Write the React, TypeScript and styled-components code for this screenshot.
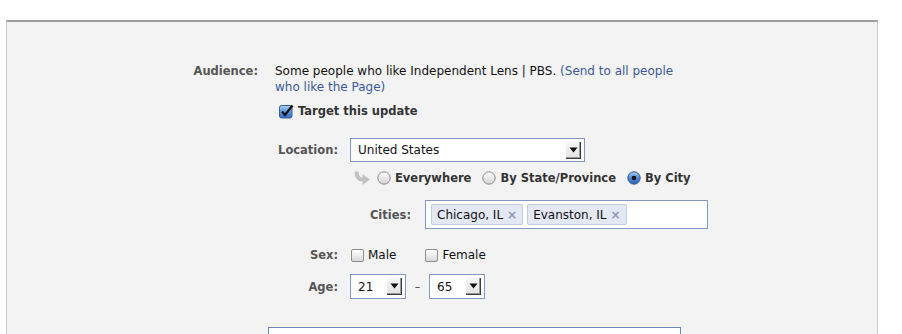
import styled, { createGlobalStyle } from "styled-components";

const GlobalStyle = createGlobalStyle`
  body {
    margin: 0;
    background: #fff;
    font-family: "DejaVu Sans", "Liberation Sans", sans-serif;
    font-size: 11px;
    color: #333;
  }
`;

const CheckBox = ({ checked }: { checked?: boolean }) =>
  checked ? (
    <BoxIcon width="15" height="15" viewBox="0 0 15 15">
      <defs>
        <linearGradient id="cbBlue" x1="0" y1="0" x2="0" y2="1">
          <stop offset="0" stopColor="#a9cdf3" />
          <stop offset="0.5" stopColor="#5d97de" />
          <stop offset="1" stopColor="#2f6ec6" />
        </linearGradient>
      </defs>
      <rect x="0.5" y="1.5" width="12.5" height="12.5" rx="2" fill="url(#cbBlue)" stroke="#3d5f91" />
      <path d="M3 7.5 L6 11 L13.5 1.5" fill="none" stroke="#111" strokeWidth="2.2" />
    </BoxIcon>
  ) : (
    <EmptyBox />
  );

const Radio = ({ on }: { on?: boolean }) => (
  <BoxIcon width="14" height="14" viewBox="0 0 14 14">
    <defs>
      <linearGradient id="rGray" x1="0" y1="0" x2="0" y2="1">
        <stop offset="0" stopColor="#fdfdfd" />
        <stop offset="1" stopColor="#d4d4d4" />
      </linearGradient>
      <linearGradient id="rBlue" x1="0" y1="0" x2="0" y2="1">
        <stop offset="0" stopColor="#a9cdf3" />
        <stop offset="0.5" stopColor="#4f8ad8" />
        <stop offset="1" stopColor="#2a62b8" />
      </linearGradient>
    </defs>
    <circle cx="7" cy="7" r="6.2" fill={on ? "url(#rBlue)" : "url(#rGray)"} stroke={on ? "#32588f" : "#8a8a8a"} />
    {on && <circle cx="7" cy="7" r="2.3" fill="#111" />}
  </BoxIcon>
);

// grey "sub option" hook arrow
const SubArrow = () => (
  <BoxIcon width="17" height="15" viewBox="0 0 17 15">
    <path d="M2.5 0.5 C2.5 6 4.5 8.5 9 8.5" fill="none" stroke="#c2c2c2" strokeWidth="4" />
    <path d="M8.5 3 L16 8.5 L8.5 14 Z" fill="#c2c2c2" />
  </BoxIcon>
);

const Select = ({ value, width, height }: { value: string; width: number; height: number }) => (
  <SelectBox style={{ width, height }}>
    <span>{value}</span>
    <DropBtn>
      <svg width="9" height="6" viewBox="0 0 9 6">
        <path d="M0.5 0.5 H8.5 L4.5 5.5 Z" fill="#111" />
      </svg>
    </DropBtn>
  </SelectBox>
);

const Token = ({ text }: { text: string }) => (
  <Chip>
    {text}
    <Close>×</Close>
  </Chip>
);

export default function App() {
  return (
    <>
      <GlobalStyle />
      <Panel>
        <Field $label={251} $gap={17}>
          <Label $top>Audience:</Label>
          <Desc>
            Some people who like Independent Lens | PBS. <Link>(Send to all people who like the Page)</Link>
          </Desc>
        </Field>

        <Target>
          <CheckBox checked />
          <span>Target this update</span>
        </Target>

        <Field $label={331} $gap={12} $top={19}>
          <Label>Location:</Label>
          <Select value="United States" width={235} height={24} />
        </Field>

        <RadioRow>
          <SubArrow />
          <Choice>
            <Radio />
            Everywhere
          </Choice>
          <Choice>
            <Radio />
            By State/Province
          </Choice>
          <Choice>
            <Radio on />
            By City
          </Choice>
        </RadioRow>

        <Field $label={404} $gap={14} $top={14}>
          <Label>Cities:</Label>
          <TokenInput>
            <Token text="Chicago, IL" />
            <Token text="Evanston, IL" />
          </TokenInput>
        </Field>

        <Field $label={331} $gap={13} $top={18}>
          <Label>Sex:</Label>
          <Options>
            <Plain>
              <CheckBox />
              Male
            </Plain>
            <Plain>
              <CheckBox />
              Female
            </Plain>
          </Options>
        </Field>

        <Field $label={331} $gap={12} $top={11}>
          <Label>Age:</Label>
          <AgeRange>
            <Select value="21" width={56} height={25} />
            <Dash>–</Dash>
            <Select value="65" width={56} height={25} />
          </AgeRange>
        </Field>

        <MessageBox />
      </Panel>
    </>
  );
}

const Panel = styled.div`
  margin: 20px 0 0 6px;
  width: 872px;
  height: 314px;
  overflow: hidden;
  box-sizing: border-box;
  background: #f3f3f3;
  border: 1px solid #c9c9c9;
  border-top: 2px solid #9e9e9e;
  border-bottom: none;
  padding-top: 41px;
`;

const Field = styled.div<{ $label: number; $gap: number; $top?: number }>`
  display: grid;
  grid-template-columns: ${(p) => p.$label}px auto;
  column-gap: ${(p) => p.$gap}px;
  align-items: center;
  justify-items: start;
  margin-top: ${(p) => p.$top ?? 0}px;
`;

const Label = styled.div<{ $top?: boolean }>`
  justify-self: end;
  align-self: ${(p) => (p.$top ? "start" : "center")};
  font-weight: bold;
  font-size: 11.5px;
  color: #555;
  line-height: 16px;
`;

const Desc = styled.div`
  max-width: 406px;
  font-size: 12px;
  line-height: 16px;
  color: #111;
`;

const Link = styled.span`
  color: #3b5998;
`;

const BoxIcon = styled.svg`
  display: block;
  flex: none;
`;

const EmptyBox = styled.span`
  display: block;
  flex: none;
  width: 11px;
  height: 11px;
  border: 1px solid #8c8c8c;
  border-radius: 2px;
  background: linear-gradient(#ffffff, #d9d9d9);
`;

const Target = styled.div`
  display: flex;
  align-items: center;
  gap: 4px;
  margin: 8px 0 0 272px;
  font-weight: bold;
  font-size: 11.5px;
  color: #333;
  line-height: 16px;
`;

const SelectBox = styled.div`
  box-sizing: border-box;
  display: flex;
  align-items: center;
  justify-content: space-between;
  padding: 0 3px 0 7px;
  background: #fff;
  border: 1px solid #8397c2;
  color: #111;
  font-size: 12px;
`;

const DropBtn = styled.span`
  display: flex;
  align-items: center;
  justify-content: center;
  width: 14px;
  height: 16px;
  padding: 0 1px 1px 0;
  background: linear-gradient(#f6f6f6, #e2e2e2);
  box-shadow: inset -1px -1px 0 #3c3c3c, inset -2px -2px 0 #9a9a9a;
`;

const RadioRow = styled.div`
  display: flex;
  align-items: center;
  margin: 8px 0 0 347px;
  line-height: 16px;
  & > svg {
    margin-right: 6px;
  }
`;

const Choice = styled.label`
  display: flex;
  align-items: center;
  gap: 4px;
  margin-right: 11px;
  font-weight: bold;
  font-size: 11.5px;
  color: #333;
`;

const TokenInput = styled.div`
  box-sizing: border-box;
  width: 283px;
  height: 29px;
  display: flex;
  align-items: center;
  gap: 4px;
  padding: 0 5px;
  background: #fff;
  border: 1px solid #8397c2;
`;

const Chip = styled.span`
  display: flex;
  align-items: center;
  gap: 4px;
  height: 19px;
  padding: 0 5px 0 5px;
  background: #e3e8f2;
  border: 1px solid #c3cde0;
  border-radius: 2px;
  color: #111;
  font-size: 12px;
`;

const Close = styled.span`
  color: #8b99b5;
  font-weight: bold;
  font-size: 12px;
`;

const Options = styled.div`
  display: flex;
  align-items: center;
  gap: 29px;
  line-height: 16px;
`;

const Plain = styled.label`
  display: flex;
  align-items: center;
  gap: 4px;
  color: #111;
  font-size: 12px;
`;

const AgeRange = styled.div`
  display: flex;
  align-items: center;
`;

const Dash = styled.span`
  width: 23px;
  text-align: center;
  color: #333;
`;

const MessageBox = styled.div`
  margin: 28px 0 0 261px;
  width: 413px;
  height: 40px;
  box-sizing: border-box;
  background: #fff;
  border: 1px solid #6f86b8;
`;
